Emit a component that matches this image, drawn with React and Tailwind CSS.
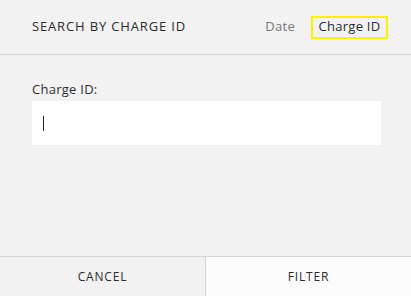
import React from "react";

const App = () => {
  return (
    <div
      className="w-[411px] h-[296px] bg-[#f2f2f2] flex flex-col text-[#333]"
      style={{ fontFamily: "'Open Sans', sans-serif" }}
    >
      <div className="h-[55px] border-b border-[#d4d4d4] flex items-center pl-8 pr-[23px]">
        <div className="text-[13px] tracking-[0.065em] font-medium text-[#2b2b2b]">
          SEARCH BY CHARGE ID
        </div>
        <div className="ml-auto flex items-center gap-[16px] text-[13px] tracking-[0.02em]">
          <button className="text-[#777]">Date</button>
          <button className="h-[23px] w-[77px] border-2 border-[#fbf200] text-[#2b2b2b] flex items-center justify-center">
            Charge ID
          </button>
        </div>
      </div>
      <div className="flex-1 px-8 pt-[26px]">
        <label className="block text-[13px] tracking-[0.02em] text-[#2f2f2f] leading-4">Charge ID:</label>
        <div className="mt-[4px] h-[44px] w-[349px] bg-white flex items-center px-[11px]">
          <div className="w-px h-[15px] bg-[#222]" />
        </div>
      </div>
      <div className="h-[40px] border-t border-[#d4d4d4] flex text-[12px] tracking-[0.07em] font-medium text-[#2b2b2b]">
        <button className="w-[206px] border-r border-[#d4d4d4] flex items-center justify-center">
          CANCEL
        </button>
        <button className="flex-1 bg-[#fbfbfb] flex items-center justify-center">
          FILTER
        </button>
      </div>
    </div>
  );
};

export default App;
